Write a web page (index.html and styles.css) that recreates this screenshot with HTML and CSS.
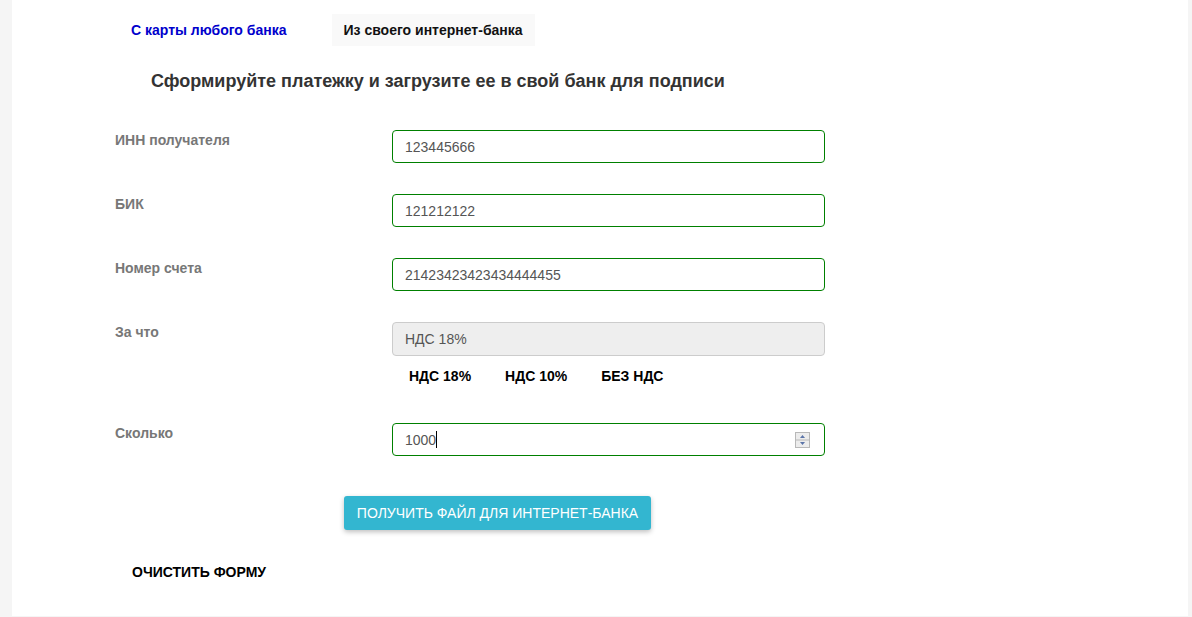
FILE: index.html
```html
<!DOCTYPE html>
<html lang="ru">
<head>
<meta charset="utf-8">
<title>Оплата</title>
<link rel="stylesheet" href="styles.css">
</head>
<body>
<div class="page">
  <nav class="tabs">
    <a class="tab tab-link" href="#">С карты любого банка</a>
    <a class="tab tab-active" href="#">Из своего интернет-банка</a>
  </nav>
  <h1 class="title">Сформируйте платежку и загрузите ее в свой банк для подписи</h1>
  <form class="form">
    <div class="row">
      <label class="label">ИНН получателя</label>
      <input class="input" type="text" value="123445666">
    </div>
    <div class="row">
      <label class="label">БИК</label>
      <input class="input" type="text" value="121212122">
    </div>
    <div class="row">
      <label class="label">Номер счета</label>
      <input class="input" type="text" value="21423423423434444455">
    </div>
    <div class="row row-tax">
      <label class="label">За что</label>
      <div class="tax">
        <input class="input input-disabled" type="text" value="НДС 18%" disabled>
        <div class="options">
          <button type="button" class="opt">НДС 18%</button>
          <button type="button" class="opt">НДС 10%</button>
          <button type="button" class="opt">БЕЗ НДС</button>
        </div>
      </div>
    </div>
    <div class="row">
      <label class="label">Сколько</label>
      <div class="input number">
        <span class="num-value">1000</span><span class="caret"></span>
        <span class="spinner">
          <svg width="15" height="16" viewBox="0 0 15 16">
            <rect x="0.5" y="0.5" width="14" height="15" fill="#ececec" stroke="#b8b8b8"/>
            <line x1="1" y1="8" x2="14" y2="8" stroke="#b8b8b8"/>
            <path d="M5 6 L7.5 3 L10 6 Z" fill="#5a74a8"/>
            <path d="M5 10 L10 10 L7.5 13 Z" fill="#5a74a8"/>
          </svg>
        </span>
      </div>
    </div>
    <div class="actions">
      <button type="button" class="btn-primary">ПОЛУЧИТЬ ФАЙЛ ДЛЯ ИНТЕРНЕТ-БАНКА</button>
    </div>
    <div class="clear-wrap">
      <button type="button" class="btn-clear">ОЧИСТИТЬ ФОРМУ</button>
    </div>
  </form>
</div>
</body>
</html>
```

FILE: styles.css
```css
html, body {
  margin: 0;
  padding: 0;
  background: #f5f5f5;
  font-family: "Liberation Sans", Arial, sans-serif;
}
.page {
  margin-left: 12px;
  width: 1176px;
  height: 616px;
  background: #ffffff;
  box-sizing: border-box;
  padding-top: 14px;
}
.tabs {
  display: flex;
  gap: 33px;
  padding-left: 107px;
}
.tab {
  display: block;
  height: 32px;
  line-height: 32px;
  padding: 0 12px;
  font-size: 14px;
  font-weight: bold;
  text-decoration: none;
}
.tab-link {
  color: #0000cc;
}
.tab-active {
  color: #111;
  background: #f9f9f9;
}
.title {
  margin: 22px 0 0 139px;
  font-size: 18px;
  line-height: 26px;
  font-weight: bold;
  color: #333;
}
.form {
  margin-top: 36px;
  padding-left: 103px;
}
.row {
  display: grid;
  grid-template-columns: 277px 433px;
  align-items: start;
  margin-bottom: 31px;
}
.label {
  font-size: 14px;
  line-height: 20px;
  font-weight: bold;
  color: #777;
}
.input {
  box-sizing: border-box;
  width: 433px;
  height: 33px;
  border: 1px solid #008000;
  border-radius: 4px;
  padding: 0 12px;
  font-family: "Liberation Sans", Arial, sans-serif;
  font-size: 14px;
  color: #555;
  background: #fff;
  outline: none;
}
.input-disabled {
  height: 34px;
  background: #eeeeee;
  border-color: #cccccc;
  color: #555;
}
.row-tax {
  margin-bottom: 37px;
}
.options {
  display: flex;
  padding-left: 5px;
  margin-top: 10px;
}
.opt {
  border: none;
  background: transparent;
  font-family: "Liberation Sans", Arial, sans-serif;
  font-size: 14px;
  font-weight: bold;
  color: #000;
  line-height: 20px;
  padding: 0 12px;
  margin-right: 10px;
}
.number {
  position: relative;
  display: flex;
  align-items: center;
}
.num-value {
  color: #555;
}
.caret {
  display: inline-block;
  width: 1px;
  height: 17px;
  background: #000;
}
.spinner {
  position: absolute;
  right: 14px;
  top: 8px;
  width: 15px;
  height: 16px;
  display: block;
}
.spinner svg {
  display: block;
}
.actions {
  padding-left: 229px;
  margin-top: 40px;
}
.btn-primary {
  height: 34px;
  width: 307px;
  border: none;
  border-radius: 3px;
  background: #33b6d0;
  color: #fff;
  font-family: "Liberation Sans", Arial, sans-serif;
  font-size: 14px;
  padding: 0;
  box-shadow: 0 2px 5px rgba(0, 0, 0, 0.25);
}
.clear-wrap {
  margin-top: 32px;
  padding-left: 5px;
}
.btn-clear {
  border: none;
  background: transparent;
  padding: 0 12px;
  font-family: "Liberation Sans", Arial, sans-serif;
  font-size: 14px;
  font-weight: bold;
  line-height: 20px;
  color: #000;
}
```
